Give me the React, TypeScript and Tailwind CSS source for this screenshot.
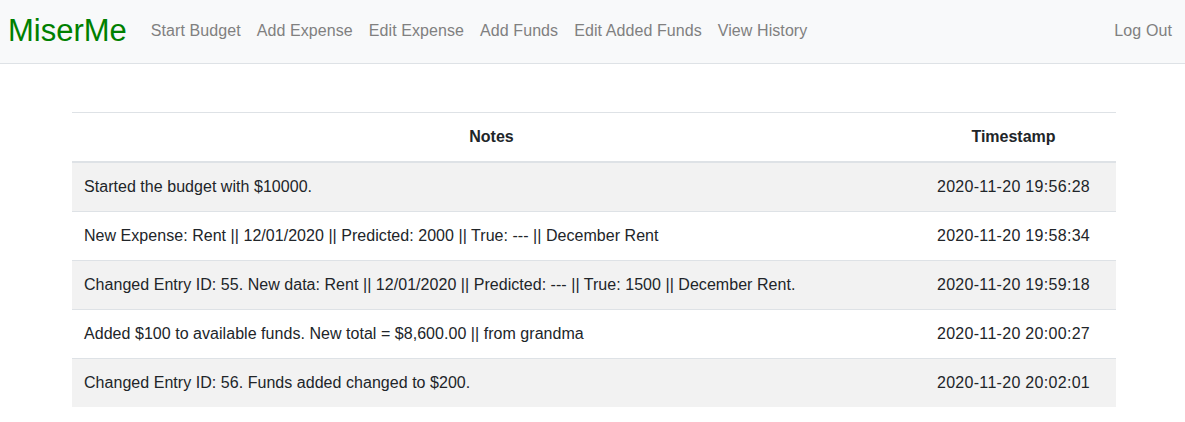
const links = ["Start Budget", "Add Expense", "Edit Expense", "Add Funds", "Edit Added Funds", "View History"];

const rows = [
  ["Started the budget with $10000.", "2020-11-20 19:56:28"],
  ["New Expense: Rent || 12/01/2020 || Predicted: 2000 || True: --- || December Rent", "2020-11-20 19:58:34"],
  ["Changed Entry ID: 55. New data: Rent || 12/01/2020 || Predicted: --- || True: 1500 || December Rent.", "2020-11-20 19:59:18"],
  ["Added $100 to available funds. New total = $8,600.00 || from grandma", "2020-11-20 20:00:27"],
  ["Changed Entry ID: 56. Funds added changed to $200.", "2020-11-20 20:02:01"],
];

export default function App() {
  return (
    <div className="min-h-[422px] bg-white text-[#212529] font-['Liberation_Sans',Arial,sans-serif]">
      <nav className="flex items-center h-[64px] pl-[8px] pr-[5px] bg-[#f8f9fa] border-b border-[#dee2e6]">
        <span className="text-[31px] text-[#008000] mr-[16px] leading-none -mt-[2px]">MiserMe</span>
        <div className="flex flex-1 -mt-[1px]">
          {links.map((l) => (
            <a key={l} className="px-[8px] text-[16px] tracking-[0.08px] text-[#808080]">{l}</a>
          ))}
        </div>
        <a className="px-[8px] text-[16px] tracking-[0.1px] text-[#808080] -mt-[1px]">Log Out</a>
      </nav>

      <div className="w-[1044px] ml-[72px] mt-[48px]">
        <table className="w-full border-collapse text-[16px] leading-[24px]">
          <thead>
            <tr className="border-t border-[#dee2e6] border-b-2">
              <th className="w-[839px] p-[12px] font-bold text-center">Notes</th>
              <th className="p-[12px] font-bold text-center">Timestamp</th>
            </tr>
          </thead>
          <tbody>
            {rows.map((r, i) => (
              <tr key={i} className={i % 2 === 0 ? "bg-[#f2f2f2] border-t border-[#dee2e6]" : "border-t border-[#dee2e6]"}>
                <td className="p-[12px] tracking-[0.04px]">{r[0]}</td>
                <td className="p-[12px] text-center tracking-[0.3px]">{r[1]}</td>
              </tr>
            ))}
          </tbody>
        </table>
      </div>
    </div>
  );
}
